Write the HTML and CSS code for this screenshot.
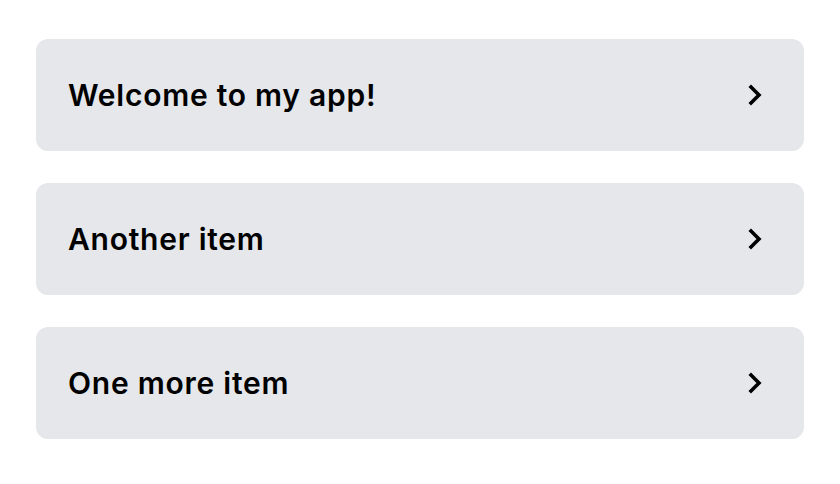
FILE: index.html
```html
<!DOCTYPE html>
<html>
<head>
<meta charset="utf-8">
<link rel="stylesheet" href="styles.css">
</head>
<body>
<div class="list">
  <div class="item"><span class="label">Welcome to my app!</span><svg class="chev" width="24" height="24" viewBox="0 0 24 24"><path d="M8 4 L16 12 L8 20" fill="none" stroke="#000" stroke-width="3.6" stroke-linecap="square" stroke-linejoin="miter"/></svg></div>
  <div class="item"><span class="label">Another item</span><svg class="chev" width="24" height="24" viewBox="0 0 24 24"><path d="M8 4 L16 12 L8 20" fill="none" stroke="#000" stroke-width="3.6" stroke-linecap="square" stroke-linejoin="miter"/></svg></div>
  <div class="item"><span class="label">One more item</span><svg class="chev" width="24" height="24" viewBox="0 0 24 24"><path d="M8 4 L16 12 L8 20" fill="none" stroke="#000" stroke-width="3.6" stroke-linecap="square" stroke-linejoin="miter"/></svg></div>
</div>
</body>
</html>
```
FILE: styles.css
```css
html, body {
  margin: 0;
  background: #ffffff;
}
body {
  padding: 39px 36px;
  font-family: Inter, "Noto Sans", sans-serif;
}
.list {
  display: flex;
  flex-direction: column;
  gap: 32px;
}
.item {
  height: 112px;
  box-sizing: border-box;
  background: #e5e7eb;
  border-radius: 12px;
  padding: 0 32px;
  display: flex;
  align-items: center;
  justify-content: space-between;
}
.label {
  font-size: 30px;
  font-weight: 600;
  color: #000;
  letter-spacing: 0.75px;
}
.chev {
  margin-right: 5px;
}
```
